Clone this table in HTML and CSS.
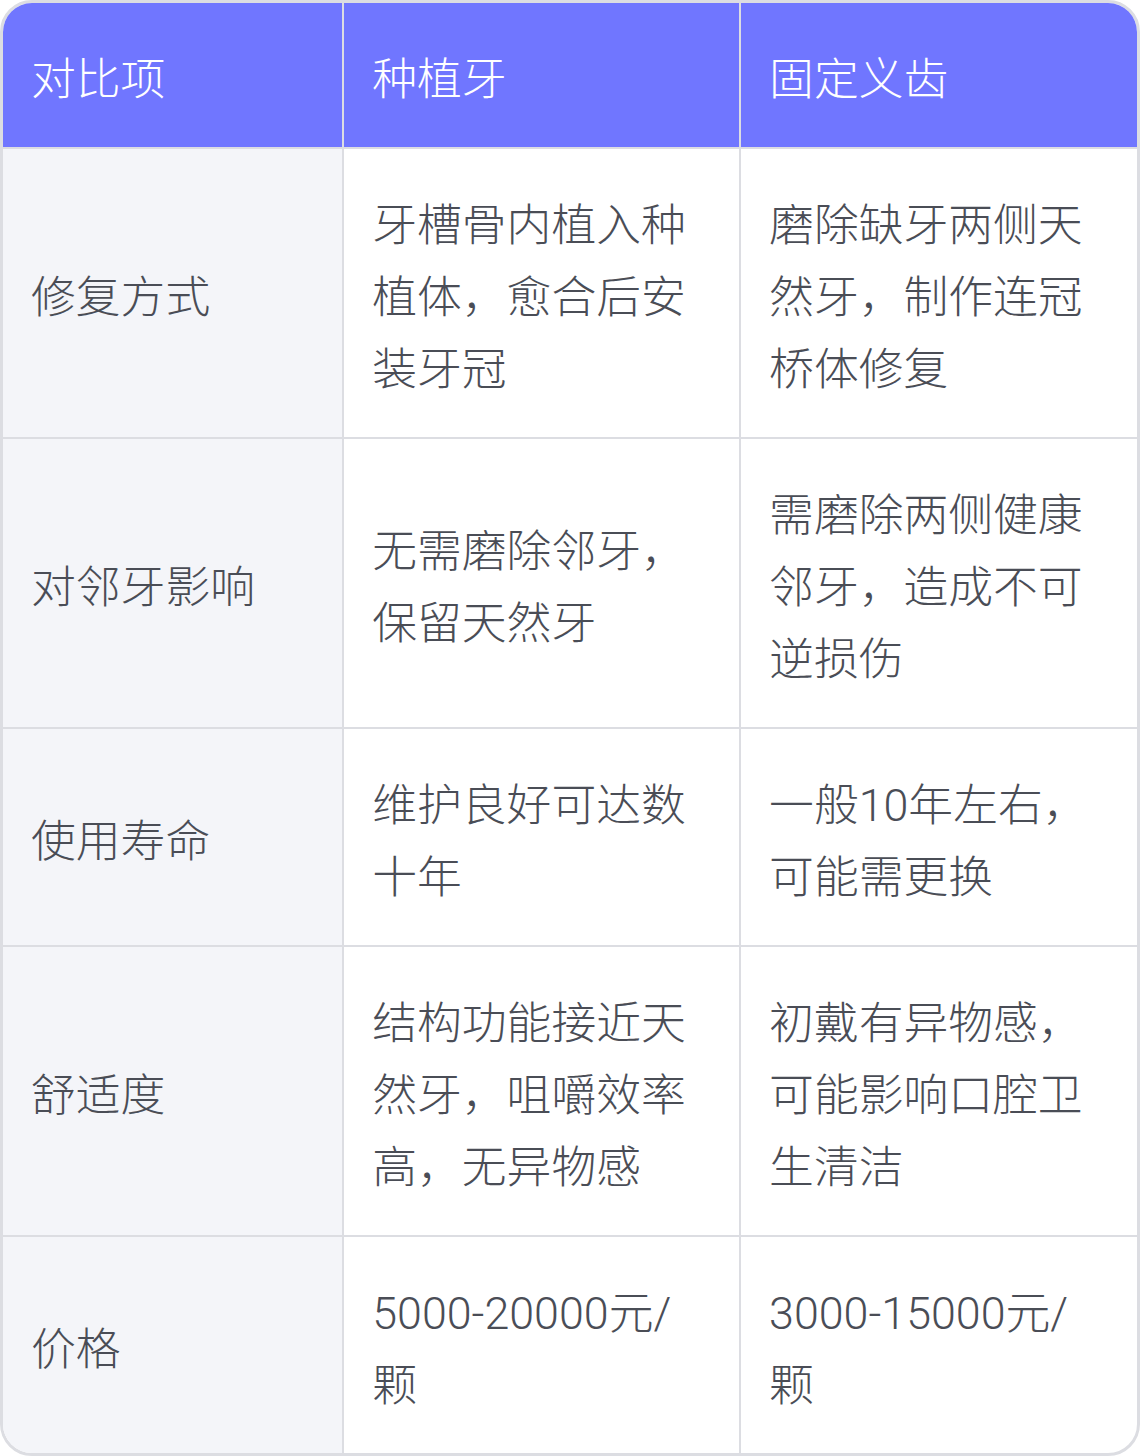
FILE: index.html
```html
<!DOCTYPE html>
<html lang="zh-CN">
<head>
<meta charset="utf-8">
<link rel="stylesheet" href="styles.css">
</head>
<body>
<div class="wrap">
  <table class="cmp">
    <colgroup>
      <col class="c1"><col class="c2"><col class="c3">
    </colgroup>
    <thead>
      <tr><th>对比项</th><th>种植牙</th><th>固定义齿</th></tr>
    </thead>
    <tbody>
      <tr><td>修复方式</td><td>牙槽骨内植入种植体，愈合后安装牙冠</td><td>磨除缺牙两侧天然牙，制作连冠桥体修复</td></tr>
      <tr><td>对邻牙影响</td><td>无需磨除邻牙，保留天然牙</td><td>需磨除两侧健康邻牙，造成不可逆损伤</td></tr>
      <tr><td>使用寿命</td><td>维护良好可达数十年</td><td>一般10年左右，可能需更换</td></tr>
      <tr><td>舒适度</td><td>结构功能接近天然牙，咀嚼效率高，无异物感</td><td>初戴有异物感，可能影响口腔卫生清洁</td></tr>
      <tr><td>价格</td><td>5000-20000元/颗</td><td>3000-15000元/颗</td></tr>
    </tbody>
  </table>
</div>
</body>
</html>
```
FILE: styles.css
```css
html, body {
  margin: 0;
  padding: 0;
  background: #ffffff;
}
.wrap {
  width: 1140px;
  height: 1456px;
  box-sizing: border-box;
  border: 3px solid #dcdde2;
  border-radius: 32px;
  overflow: hidden;
  background: #ffffff;
}
.cmp {
  width: 100%;
  border-collapse: collapse;
  border-style: hidden;
  table-layout: fixed;
  font-family: Roboto, "Noto Sans CJK SC", sans-serif;
  font-weight: 300;
  font-size: 44.8px;
  line-height: 72px;
  color: #4a4d56;
}
.c1 { width: 30%; }
.c2 { width: 35%; }
.c3 { width: 35%; }
.cmp th,
.cmp td {
  border: 2px solid #dcdde2;
  padding: 41px 28px 31px;
  text-align: left;
  vertical-align: middle;
  font-weight: 300;
}
.cmp th {
  background: #7076ff;
  color: #ffffff;
}
.cmp td:first-child {
  background: #f4f5f9;
}
```
